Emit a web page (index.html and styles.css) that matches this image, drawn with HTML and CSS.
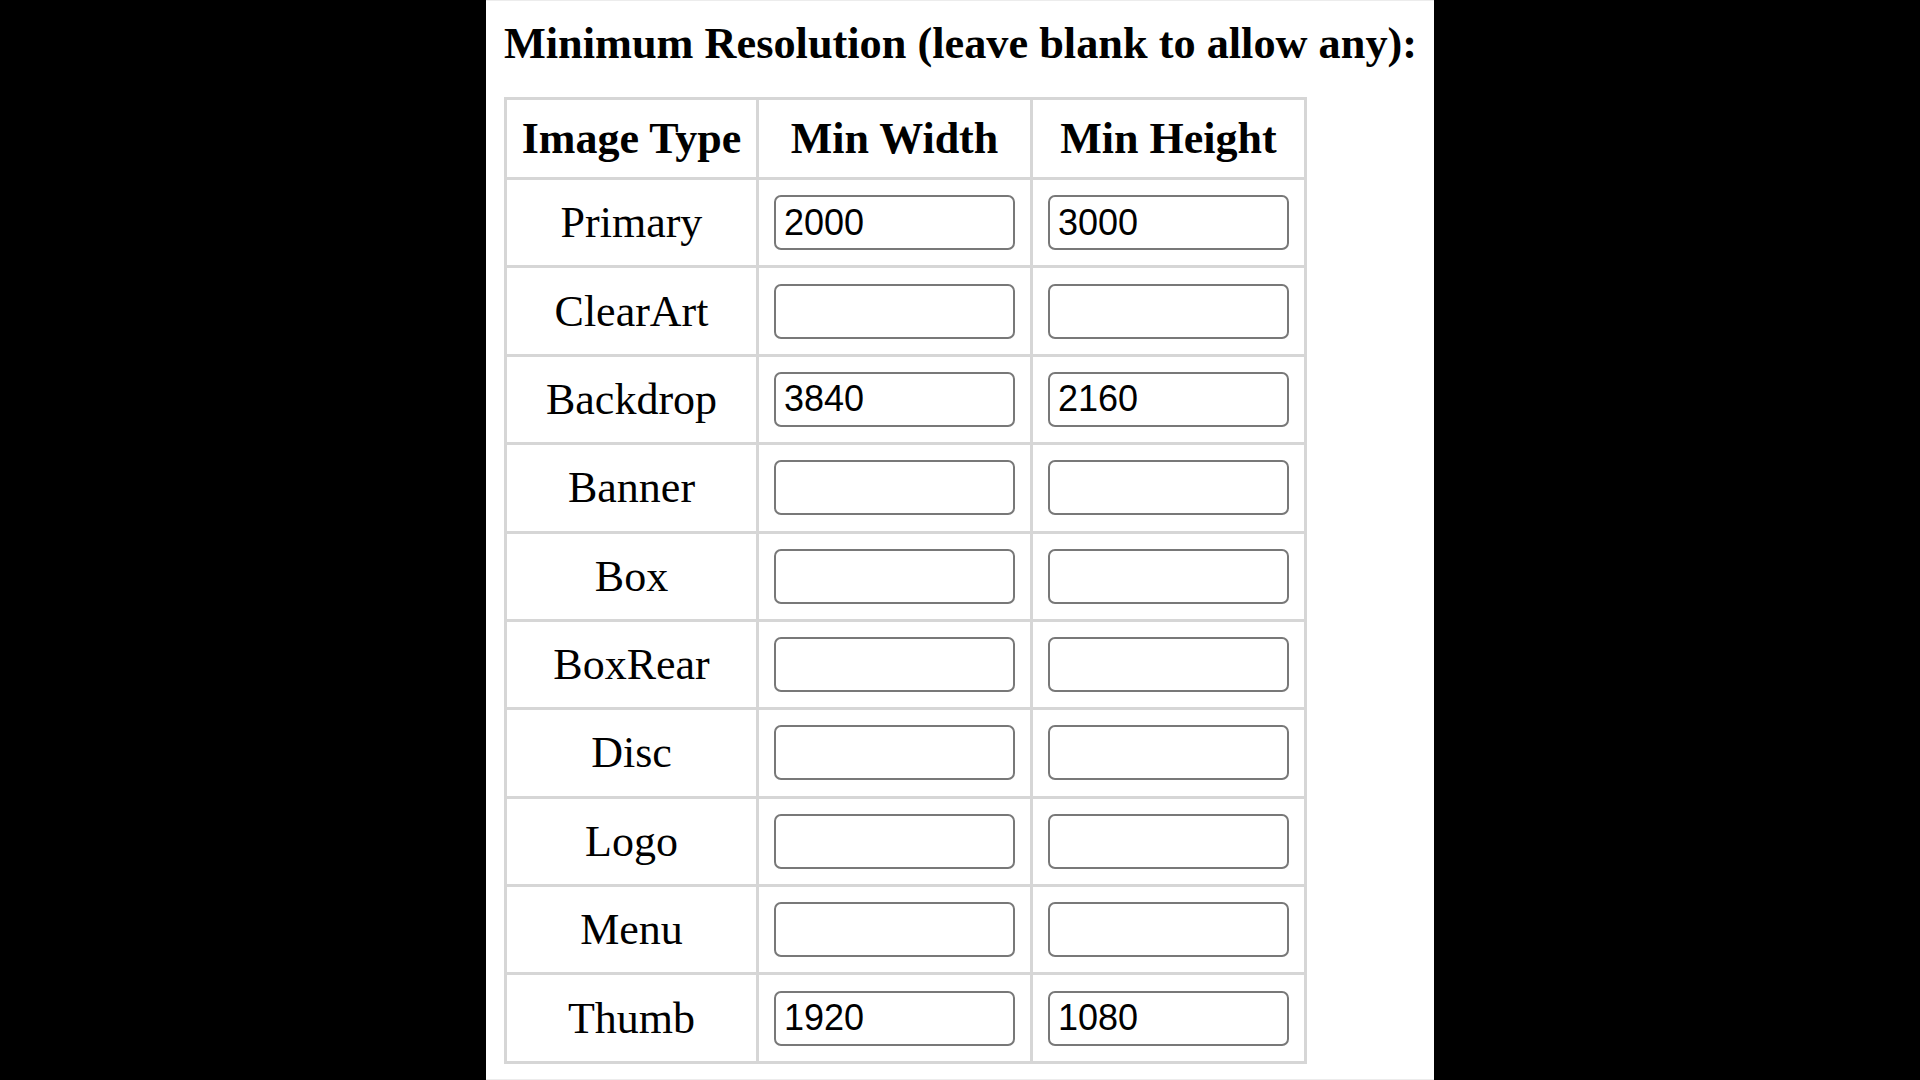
FILE: index.html
```html
<!DOCTYPE html>
<html lang="en">
<head>
  <meta charset="UTF-8">
  <meta name="viewport" content="width=device-width, initial-scale=1.0">
  <title>Minimum Resolution</title>
  <link rel="stylesheet" href="styles.css">
</head>
<body>

  <div class="panel">
    <h3 class="title">Minimum Resolution (leave blank to allow any):</h3>

    <!-- Min size per image type -->
    <table class="res-table">
      <tr>
        <th class="type-col">Image Type</th>
        <th>Min Width</th>
        <th>Min Height</th>
      </tr>
      <tr>
        <td>Primary</td>
        <td><input type="text" class="res-input" value="2000"></td>
        <td><input type="text" class="res-input" value="3000"></td>
      </tr>
      <tr>
        <td>ClearArt</td>
        <td><input type="text" class="res-input"></td>
        <td><input type="text" class="res-input"></td>
      </tr>
      <tr>
        <td>Backdrop</td>
        <td><input type="text" class="res-input" value="3840"></td>
        <td><input type="text" class="res-input" value="2160"></td>
      </tr>
      <tr>
        <td>Banner</td>
        <td><input type="text" class="res-input"></td>
        <td><input type="text" class="res-input"></td>
      </tr>
      <tr>
        <td>Box</td>
        <td><input type="text" class="res-input"></td>
        <td><input type="text" class="res-input"></td>
      </tr>
      <tr>
        <td>BoxRear</td>
        <td><input type="text" class="res-input"></td>
        <td><input type="text" class="res-input"></td>
      </tr>
      <tr>
        <td>Disc</td>
        <td><input type="text" class="res-input"></td>
        <td><input type="text" class="res-input"></td>
      </tr>
      <tr>
        <td>Logo</td>
        <td><input type="text" class="res-input"></td>
        <td><input type="text" class="res-input"></td>
      </tr>
      <tr>
        <td>Menu</td>
        <td><input type="text" class="res-input"></td>
        <td><input type="text" class="res-input"></td>
      </tr>
      <tr>
        <td>Thumb</td>
        <td><input type="text" class="res-input" value="1920"></td>
        <td><input type="text" class="res-input" value="1080"></td>
      </tr>
    </table>
  </div>

</body>
</html>
```

FILE: styles.css
```css
body {
  margin: 0;
  padding: 0;
  background-color: #000;
  font-family: "Liberation Serif", "Times New Roman", serif;
  color: #000;
}

.panel {
  width: 948px;
  height: 1080px;
  margin-left: 486px;
  padding: 0 18px;
  box-sizing: border-box;
  background-color: #fff;
  border-top: 1px solid #ececec;
  border-bottom: 1px solid #ececec;
  overflow: hidden;
}

.title {
  font-size: 44.3px;
  font-weight: bold;
  margin: 17px 0 28px 0;
  white-space: nowrap;
}

.res-table {
  border-collapse: collapse;
  border: 3px solid #d6d6d6;
}

.res-table th, .res-table td {
  border: 3px solid #d6d6d6;
  text-align: center;
  vertical-align: middle;
  padding: 15.2px 15px;
  font-size: 44px;
}

.res-table th {
  font-weight: bold;
  padding-top: 13px;
  padding-bottom: 13px;
}

.res-table .type-col {
  width: 249px;
  padding-left: 0;
  padding-right: 0;
}

.res-input {
  display: block;
  width: 241px;
  height: 55px;
  box-sizing: border-box;
  border: 2px solid #787878;
  border-radius: 7px;
  padding: 0 8px;
  font-family: "Liberation Sans", Arial, sans-serif;
  font-size: 36px;
  color: #000;
  background-color: #fff;
}
```
